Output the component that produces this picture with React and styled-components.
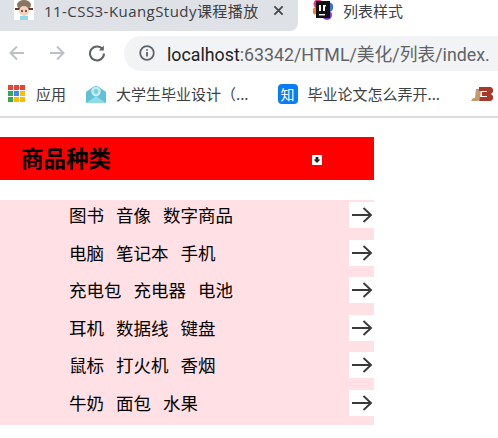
import React from 'react';
import styled, { createGlobalStyle } from 'styled-components';

const rows = [
  ['图书', '音像', '数字商品'],
  ['电脑', '笔记本', '手机'],
  ['充电包', '充电器', '电池'],
  ['耳机', '数据线', '键盘'],
  ['鼠标', '打火机', '香烟'],
  ['牛奶', '面包', '水果'],
];

const appColors = ['#ea4335', '#ea4335', '#ea4335', '#34a853', '#4285f4', '#fbbc04', '#34a853', '#fbbc04', '#fbbc04'];

function App() {
  return (
    <Page>
      <GlobalStyle />
      <TabStrip>
        <ActiveTab>
          <AvatarIcon />
          <TabTitle $spacing={0.45}>11-CSS3-KuangStudy课程播放</TabTitle>
          <CloseMark viewBox="0 0 12 12">
            <path d="M1.5 1.5l9 9M10.5 1.5l-9 9" />
          </CloseMark>
        </ActiveTab>
        <PlainTab>
          <JetBrainsIcon />
          <TabTitle>列表样式</TabTitle>
        </PlainTab>
      </TabStrip>

      <Toolbar>
        <NavIcon viewBox="0 0 18 18" $color="#bdc1c6">
          <path d="M16 9H2.5M9 2.5L2.5 9 9 15.5" />
        </NavIcon>
        <NavIcon viewBox="0 0 18 18" $color="#bdc1c6">
          <path d="M2 9h13.5M9 2.5L15.5 9 9 15.5" />
        </NavIcon>
        <NavIcon viewBox="0 0 18 18" $color="#5f6368">
          <path d="M14.6 5.2A7 7 0 1 0 16 9.5" />
          <path d="M15.8 1.6v5h-5z" fill="#5f6368" stroke="none" />
        </NavIcon>
        <Omnibox>
          <InfoIcon viewBox="0 0 16 16">
            <circle cx="8" cy="8" r="6.8" />
            <path d="M8 7v4.6M8 4.2v1.6" />
          </InfoIcon>
          <Url>
            localhost<Dim>:63342/HTML/美化/列表/index.</Dim>
          </Url>
        </Omnibox>
      </Toolbar>

      <Bookmarks>
        <Bookmark $after={20}>
          <AppsGrid>
            {appColors.map((c, i) => (
              <AppsDot key={i} $color={c} />
            ))}
          </AppsGrid>
          应用
        </Bookmark>
        <Bookmark $after={29}>
          <BookIcon viewBox="0 0 20 18">
            <path d="M0 7L7 2q3-2 6 0l7 5v11H0z" fill="#5fc0d6" />
            <path d="M0 18l10-7 10 7z" fill="#8fdbe6" />
            <circle cx="10" cy="6.5" r="4.8" fill="#c4ecf0" />
            <circle cx="10" cy="6.5" r="2.4" fill="#7ccfdd" />
          </BookIcon>
          大学生毕业设计（...
        </Bookmark>
        <Bookmark $after={31}>
          <ZhihuBadge>知</ZhihuBadge>
          毕业论文怎么弄开...
        </Bookmark>
        <BrandIcon viewBox="0 0 22 16">
          <path d="M0 15l2-3h2l1-9h5l-1 10-2 2z" fill="#c49a6c" />
          <path d="M8 1h12l2 2v3l-2 2 2 2v3l-2 2H8l1-4h7v-1h-5V6h5V5H8z" fill="#a9382c" />
        </BrandIcon>
      </Bookmarks>

      <Content>
        <Heading>
          <HeadingText>商品种类</HeadingText>
          <HeadingBullet viewBox="0 0 10 10">
            <rect width="10" height="10" fill="#fff" />
            <path d="M3.6 2h2.8v2.6H8.4L5 8 1.6 4.6h2z" fill="#222" />
          </HeadingBullet>
        </Heading>
        <List>
          {rows.map((items, i) => (
            <Row key={i}>
              <Items>
                {items.map((item) => (
                  <span key={item}>{item}</span>
                ))}
              </Items>
              <ArrowBox>
                <svg width="22" height="16" viewBox="0 0 22 16" fill="none" stroke="#3a3a3a" strokeWidth="1.9">
                  <path d="M1 8h19M12.5 1l7.5 7-7.5 7" />
                </svg>
              </ArrowBox>
            </Row>
          ))}
        </List>
      </Content>
    </Page>
  );
}

// small pixel style pictures for the tab favicons
function AvatarIcon() {
  return (
    <FaviconSvg viewBox="0 0 20 20">
      <rect width="20" height="20" fill="#fff" />
      <ellipse cx="10" cy="5" rx="7" ry="5" fill="#8a7660" />
      <path d="M1 8h18v2H1z" fill="#6a3b28" />
      <circle cx="10" cy="11" r="5" fill="#f6d2bc" />
      <circle cx="8" cy="11" r="1" fill="#5a2a20" />
      <circle cx="12" cy="11" r="1" fill="#5a2a20" />
      <rect x="6" y="16" width="8" height="4" fill="#8fd8ee" />
    </FaviconSvg>
  );
}

function JetBrainsIcon() {
  return (
    <FaviconSvg viewBox="0 0 20 20">
      <circle cx="5" cy="4" r="4.5" fill="#f0348f" />
      <circle cx="16" cy="7" r="4.5" fill="#3f6fe0" />
      <circle cx="3" cy="11" r="3.5" fill="#f58220" />
      <circle cx="14" cy="15" r="5" fill="#7a3fd6" />
      <rect x="3" y="1" width="14" height="17" fill="#111" />
      <path d="M6 5h2v6H6zM10 5h3v1.5h-1V11h-2z" fill="#fff" />
      <rect x="6" y="14" width="6" height="1.4" fill="#fff" />
    </FaviconSvg>
  );
}

export default App;

const GlobalStyle = createGlobalStyle`
  html, body {
    margin: 0;
    padding: 0;
    background: #fff;
  }
  body {
    font-family: "Noto Sans CJK SC", "Noto Sans", sans-serif;
    overflow: hidden;
  }
`;

const Page = styled.div`
  width: 498px;
  height: 438px;
  overflow: hidden;
  display: flex;
  flex-direction: column;
`;

const TabStrip = styled.div`
  height: 31px;
  display: flex;
  flex-shrink: 0;
`;

const ActiveTab = styled.div`
  width: 298px;
  box-sizing: border-box;
  padding-left: 14px;
  padding-right: 14px;
  background: #dee1e6;
  border-bottom-right-radius: 8px;
  display: flex;
  align-items: center;
  flex-shrink: 0;
  gap: 10px;
`;

const PlainTab = styled.div`
  display: flex;
  align-items: center;
  padding-left: 15px;
  gap: 10px;
`;

const FaviconSvg = styled.svg`
  width: 20px;
  height: 20px;
  flex-shrink: 0;
  margin-top: -11px;
`;

const TabTitle = styled.span`
  font-family: "Open Sans", "Noto Sans CJK SC", sans-serif;
  font-size: 15px;
  letter-spacing: ${(p) => p.$spacing || 0}px;
  color: #3c4043;
  white-space: nowrap;
  flex: 1;
  overflow: hidden;
  margin-top: -10px;
`;

const CloseMark = styled.svg`
  width: 11px;
  height: 11px;
  fill: none;
  stroke: #45494d;
  stroke-width: 2;
  flex-shrink: 0;
  margin-top: -10px;
`;

const Toolbar = styled.div`
  height: 40px;
  display: flex;
  align-items: center;
  padding-top: 4px;
  box-sizing: border-box;
  flex-shrink: 0;
`;

const NavIcon = styled.svg`
  width: 18px;
  height: 18px;
  margin-left: 8px;
  margin-right: 14px;
  fill: none;
  stroke: ${(p) => p.$color};
  stroke-width: 2;
  flex-shrink: 0;
`;

const Omnibox = styled.div`
  flex: 1;
  height: 35px;
  margin-left: 4px;
  background: #f1f3f4;
  border-radius: 18px 0 0 18px;
  display: flex;
  align-items: center;
  padding-left: 15px;
  overflow: hidden;
`;

const InfoIcon = styled.svg`
  width: 16px;
  height: 16px;
  fill: none;
  stroke: #5f6368;
  stroke-width: 1.8;
  flex-shrink: 0;
`;

const Url = styled.span`
  margin-left: 12px;
  font-family: "Roboto", "Noto Sans CJK SC", sans-serif;
  font-size: 17.8px;
  color: #202124;
  white-space: nowrap;
`;

const Dim = styled.span`
  color: #5f6368;
`;

const Bookmarks = styled.div`
  height: 47px;
  box-sizing: border-box;
  border-bottom: 2px solid #dcdcdc;
  display: flex;
  align-items: center;
  padding-left: 8px;
  flex-shrink: 0;
`;

const Bookmark = styled.div`
  display: flex;
  align-items: center;
  gap: 10px;
  margin-right: ${(p) => p.$after}px;
  font-size: 15px;
  color: #3c4043;
  white-space: nowrap;
`;

const AppsGrid = styled.div`
  display: grid;
  grid-template-columns: repeat(3, 5px);
  grid-auto-rows: 5px;
  gap: 1px;
  margin-right: 1px;
`;

const AppsDot = styled.span`
  background: ${(p) => p.$color};
`;

const BookIcon = styled.svg`
  width: 20px;
  height: 18px;
`;

const ZhihuBadge = styled.span`
  width: 20px;
  height: 20px;
  border-radius: 4px;
  background: #0a7cf5;
  color: #fff;
  font-size: 14px;
  line-height: 20px;
  text-align: center;
`;

const BrandIcon = styled.svg`
  width: 22px;
  height: 16px;
  flex-shrink: 0;
`;

const Content = styled.main`
  width: 374px;
  padding-top: 19px;
  display: flex;
  flex-direction: column;
`;

const Heading = styled.div`
  height: 43px;
  box-sizing: border-box;
  padding: 0 0 0 21px;
  background: #ff0000;
  display: flex;
  align-items: center;
  margin-bottom: 20px;
`;

const HeadingText = styled.h1`
  margin: -3px 0 0;
  width: 291px;
  font-size: 22.5px;
  font-weight: 700;
  color: #000;
`;

const HeadingBullet = styled.svg`
  width: 10px;
  height: 10px;
  margin-top: 2px;
`;

const List = styled.ul`
  margin: 0;
  padding: 0;
  list-style: none;
  background: #ffe0e4;
  height: 225px;
`;

const Row = styled.li`
  height: 37.6px;
  display: flex;
  align-items: flex-start;
  justify-content: space-between;
  padding-left: 69px;
`;

const Items = styled.div`
  display: flex;
  gap: 12px;
  font-size: 17.5px;
  line-height: 29px;
  color: #000;
`;

const ArrowBox = styled.div`
  width: 25px;
  height: 26px;
  margin-top: 2px;
  background: #fff;
  display: flex;
  align-items: center;
  justify-content: center;
`;
